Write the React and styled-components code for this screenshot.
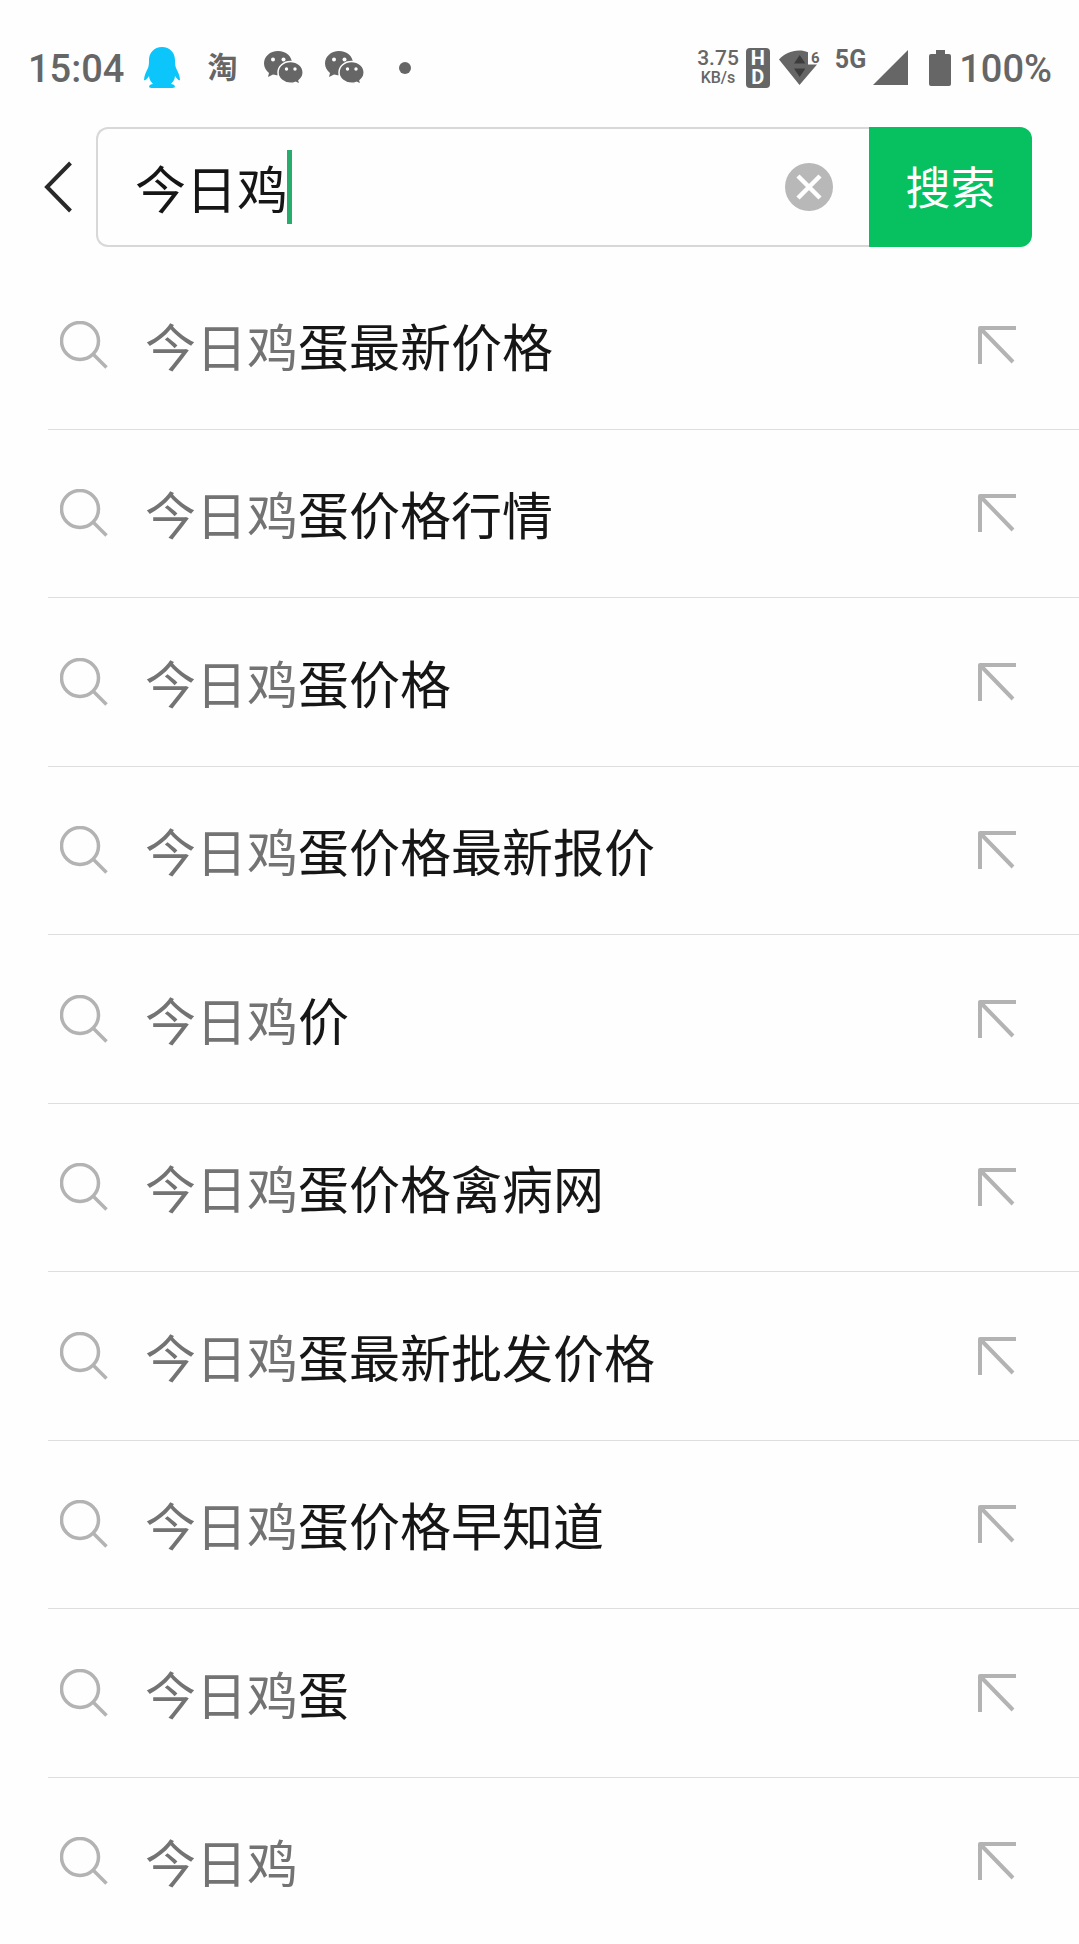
import React, { useRef, useState } from 'react';
import styled, { createGlobalStyle } from 'styled-components';

const suggestions = [
  '今日鸡蛋最新价格',
  '今日鸡蛋价格行情',
  '今日鸡蛋价格',
  '今日鸡蛋价格最新报价',
  '今日鸡价',
  '今日鸡蛋价格禽病网',
  '今日鸡蛋最新批发价格',
  '今日鸡蛋价格早知道',
  '今日鸡蛋',
  '今日鸡',
];

const GlobalStyle = createGlobalStyle`
  * {
    box-sizing: border-box;
  }

  body {
    margin: 0;
    background: #fefefe;
    color: #161616;
    font-family: 'Noto Sans CJK SC', sans-serif;
  }

  button, input {
    font-family: inherit;
  }
`;

const Page = styled.div`
  height: 100vh;
  overflow: hidden;
`;

const StatusBar = styled.header`
  display: flex;
  justify-content: space-between;
  align-items: center;
  height: 127px;
  padding: 8px 27px 0 28px;
  color: #666;
  font-family: Roboto, 'Noto Sans CJK SC', sans-serif;
  font-weight: 500;
`;

const StatusGroup = styled.div`
  display: flex;
  align-items: center;
  gap: ${(p) => p.$gap};
`;

const StatusText = styled.span`
  padding-top: 2px;
  font-size: 38px;
  line-height: 40px;
`;

const TaoBadge = styled.span`
  padding: 0 7px;
  font-size: 30px;
  line-height: 40px;
  font-weight: 700;
`;

const Dot = styled.span`
  width: 12px;
  height: 12px;
  margin-left: 13px;
  border-radius: 50%;
  background: #666;
`;

const Speed = styled.span`
  display: flex;
  flex-direction: column;
  align-items: center;
  font-size: 21px;
  line-height: 20px;

  small {
    font-size: 16px;
  }
`;

const HdBadge = styled.span`
  display: flex;
  flex-direction: column;
  align-items: center;
  width: 24px;
  margin-right: 2px;
  padding: 1px 0;
  border-radius: 4px;
  background: #666;
  color: #fff;
  font-size: 20px;
  line-height: 19px;
  font-weight: 700;
`;

const Network = styled.span`
  align-self: flex-start;
  margin-left: 7px;
  font-size: 25px;
  line-height: 26px;
  font-weight: 700;
`;

const Battery = styled.span`
  display: flex;
  align-items: center;
  gap: 8px;
  margin-left: 14px;
`;

const SearchBar = styled.form`
  display: flex;
  align-items: stretch;
  height: 120px;
  padding: 0 47px 0 44px;
`;

const IconButton = styled.button`
  display: flex;
  align-items: center;
  padding: 0;
  border: none;
  background: none;
`;

const Field = styled.div`
  display: flex;
  flex: 1;
  justify-content: space-between;
  align-items: center;
  min-width: 0;
  margin-left: 24px;
  padding: 0 36px 0 37px;
  border: 2px solid #d8d8d8;
  border-right: none;
  border-radius: 12px 0 0 12px;
`;

const InputWrap = styled.div`
  position: relative;
  display: flex;
`;

const QueryInput = styled.input`
  field-sizing: content;
  padding: 0;
  border: none;
  outline: none;
  background: none;
  color: inherit;
  caret-color: transparent;
  font-size: 51px;
  line-height: 74px;
`;

const Caret = styled.span`
  position: absolute;
  top: 0;
  right: -4px;
  width: 5px;
  height: 100%;
  background: #28ab6d;
`;

const SubmitButton = styled.button`
  width: 163px;
  padding: 0 0 4px;
  border: none;
  border-radius: 0 12px 12px 0;
  background: #07c160;
  color: #fff;
  font-size: 45px;
`;

const SuggestionList = styled.ul`
  margin: 0;
  padding: 14px 0 0 48px;
  list-style: none;
`;

const Row = styled.li`
  display: flex;
  align-items: center;
  justify-content: space-between;
  height: 169px;
  padding: 0 63px 1px 0;
  border-bottom: 1px solid #dedede;

  &:nth-child(even) {
    height: 168px;
  }
`;

const Suggestion = styled.button`
  display: flex;
  flex: 1;
  align-items: center;
  gap: 37px;
  padding: 0 0 0 12px;
  border: none;
  background: none;
  color: inherit;
  font-size: 51px;
  line-height: 74px;
  text-align: left;
`;

const Match = styled.span`
  color: #737373;
`;

const QQIcon = () => (
  <svg width="36" height="42" viewBox="0 0 36 42" fill="#0cc6fb" aria-hidden="true">
    <path d="M18 0C10 0 5 6 5 13c0 3 0 5-1 8-2 4-4 8-4 12 1 1 3-1 5-4 0 3 2 6 4 8-2 0-4 1-4 3 0 1 4 1 8 1h10c4 0 8 0 8-1 0-2-2-3-4-3 2-2 4-5 4-8 2 3 4 5 5 4 0-4-2-8-4-12-1-3-1-5-1-8C31 6 26 0 18 0Z" />
  </svg>
);

const WeChatIcon = () => (
  <svg width="39" height="34" viewBox="0 0 39 34" aria-hidden="true">
    <path fill="#666" d="M14 0C6 0 0 5.500 0 12.500c0 4 2 7 5 9.500L4 26l5-2.400c2 .6 3 .7 5 .7 8 0 14-5 14-12S22 0 14 0Z" />
    <circle cx="9" cy="8.500" r="2" fill="#fff" />
    <circle cx="19.500" cy="8.500" r="2" fill="#fff" />
    <path fill="#666" stroke="#fff" strokeWidth="1.500" d="M26.500 10.500C19.500 10.500 14 15.500 14 21.500s5.500 10.800 12.500 10.800c2 0 3.500-.4 5-.9L36 33.500l-1-4c2.500-2 4.200-5 4.200-8 0-6-5.500-11-12.700-11Z" />
    <circle cx="22.500" cy="18" r="1.700" fill="#fff" />
    <circle cx="31" cy="18" r="1.700" fill="#fff" />
  </svg>
);

const WifiIcon = () => (
  <svg width="42" height="38" viewBox="0 0 42 38" overflow="visible" aria-hidden="true">
    <path fill="#666" d="M0 10.500C5 5 12 1.500 20 1.500c4 0 6 .6 9 1.700V15.500h9L20.500 36Z" />
    <path fill="#3c3c3c" d="m15 14.500 5.700-8.500 5.700 8.500ZM15 19.500h11.400L20.700 28Z" />
    <text x="32" y="14" fill="#666" fontSize="15" fontWeight="700">6</text>
  </svg>
);

const SignalIcon = () => (
  <svg width="35" height="35" viewBox="0 0 35 35" fill="#666" aria-hidden="true">
    <path d="M35 0v35H0Z" />
  </svg>
);

const BatteryIcon = () => (
  <svg width="22" height="36" viewBox="0 0 22 36" fill="#666" aria-hidden="true">
    <path d="M7 0h9v4h4q2 0 2 2v28q0 2-2 2H2q-2 0-2-2V6q0-2 2-2h5Z" />
  </svg>
);

const BackIcon = () => (
  <svg width="28" height="52" viewBox="0 0 28 52" fill="none" stroke="#292929" strokeWidth="4" aria-hidden="true">
    <path d="M26.500 2 3 26l23.500 24" />
  </svg>
);

const ClearIcon = () => (
  <svg width="48" height="48" viewBox="0 0 48 48" aria-hidden="true">
    <circle cx="24" cy="24" r="24" fill="#b8b8b8" />
    <path d="m13 13 22 22M35 13 13 35" stroke="#fff" strokeWidth="4.500" />
  </svg>
);

const SearchIcon = () => (
  <svg width="48" height="48" viewBox="0 0 48 48" fill="none" stroke="#b3b3b3" strokeWidth="3.500" aria-hidden="true">
    <circle cx="20" cy="20" r="18.500" />
    <path d="m33 33 13.500 13.500" />
  </svg>
);

const FillIcon = () => (
  <svg width="38" height="38" viewBox="0 0 38 38" fill="none" stroke="#b3b3b3" strokeWidth="4" strokeLinejoin="round" aria-hidden="true">
    <path d="M2 38V2h36M2 2l33 34" />
  </svg>
);

const App = () => {
  const inputRef = useRef(null);
  const [query, setQuery] = useState('今日鸡');

  const onClear = () => {
    setQuery('');
    inputRef.current.focus();
  };

  return (
    <Page>
      <GlobalStyle />
      <StatusBar>
        <StatusGroup $gap="20px">
          <StatusText>15:04</StatusText>
          <QQIcon />
          <TaoBadge>淘</TaoBadge>
          <StatusGroup $gap="22px">
            <WeChatIcon />
            <WeChatIcon />
            <Dot />
          </StatusGroup>
        </StatusGroup>
        <StatusGroup $gap="7px">
          <Speed>
            <span>3.75</span>
            <small>KB/s</small>
          </Speed>
          <HdBadge>
            <span>H</span>
            <span>D</span>
          </HdBadge>
          <WifiIcon />
          <Network>5G</Network>
          <SignalIcon />
          <Battery>
            <BatteryIcon />
            <StatusText>100%</StatusText>
          </Battery>
        </StatusGroup>
      </StatusBar>

      <SearchBar onSubmit={(e) => e.preventDefault()}>
        <IconButton type="button" aria-label="返回">
          <BackIcon />
        </IconButton>
        <Field>
          <InputWrap>
            <QueryInput
              ref={inputRef}
              aria-label="搜索"
              value={query}
              onChange={(e) => setQuery(e.target.value)}
            />
            <Caret />
          </InputWrap>
          <IconButton type="button" aria-label="清除" onClick={onClear}>
            <ClearIcon />
          </IconButton>
        </Field>
        <SubmitButton type="submit">搜索</SubmitButton>
      </SearchBar>

      <SuggestionList>
        {suggestions.map((text) => (
          <Row key={text}>
            <Suggestion type="button">
              <SearchIcon />
              <span>
                <Match>今日鸡</Match>
                {text.slice(3)}
              </span>
            </Suggestion>
            <IconButton type="button" aria-label={`填入 ${text}`} onClick={() => setQuery(text)}>
              <FillIcon />
            </IconButton>
          </Row>
        ))}
      </SuggestionList>
    </Page>
  );
};

export default App;
